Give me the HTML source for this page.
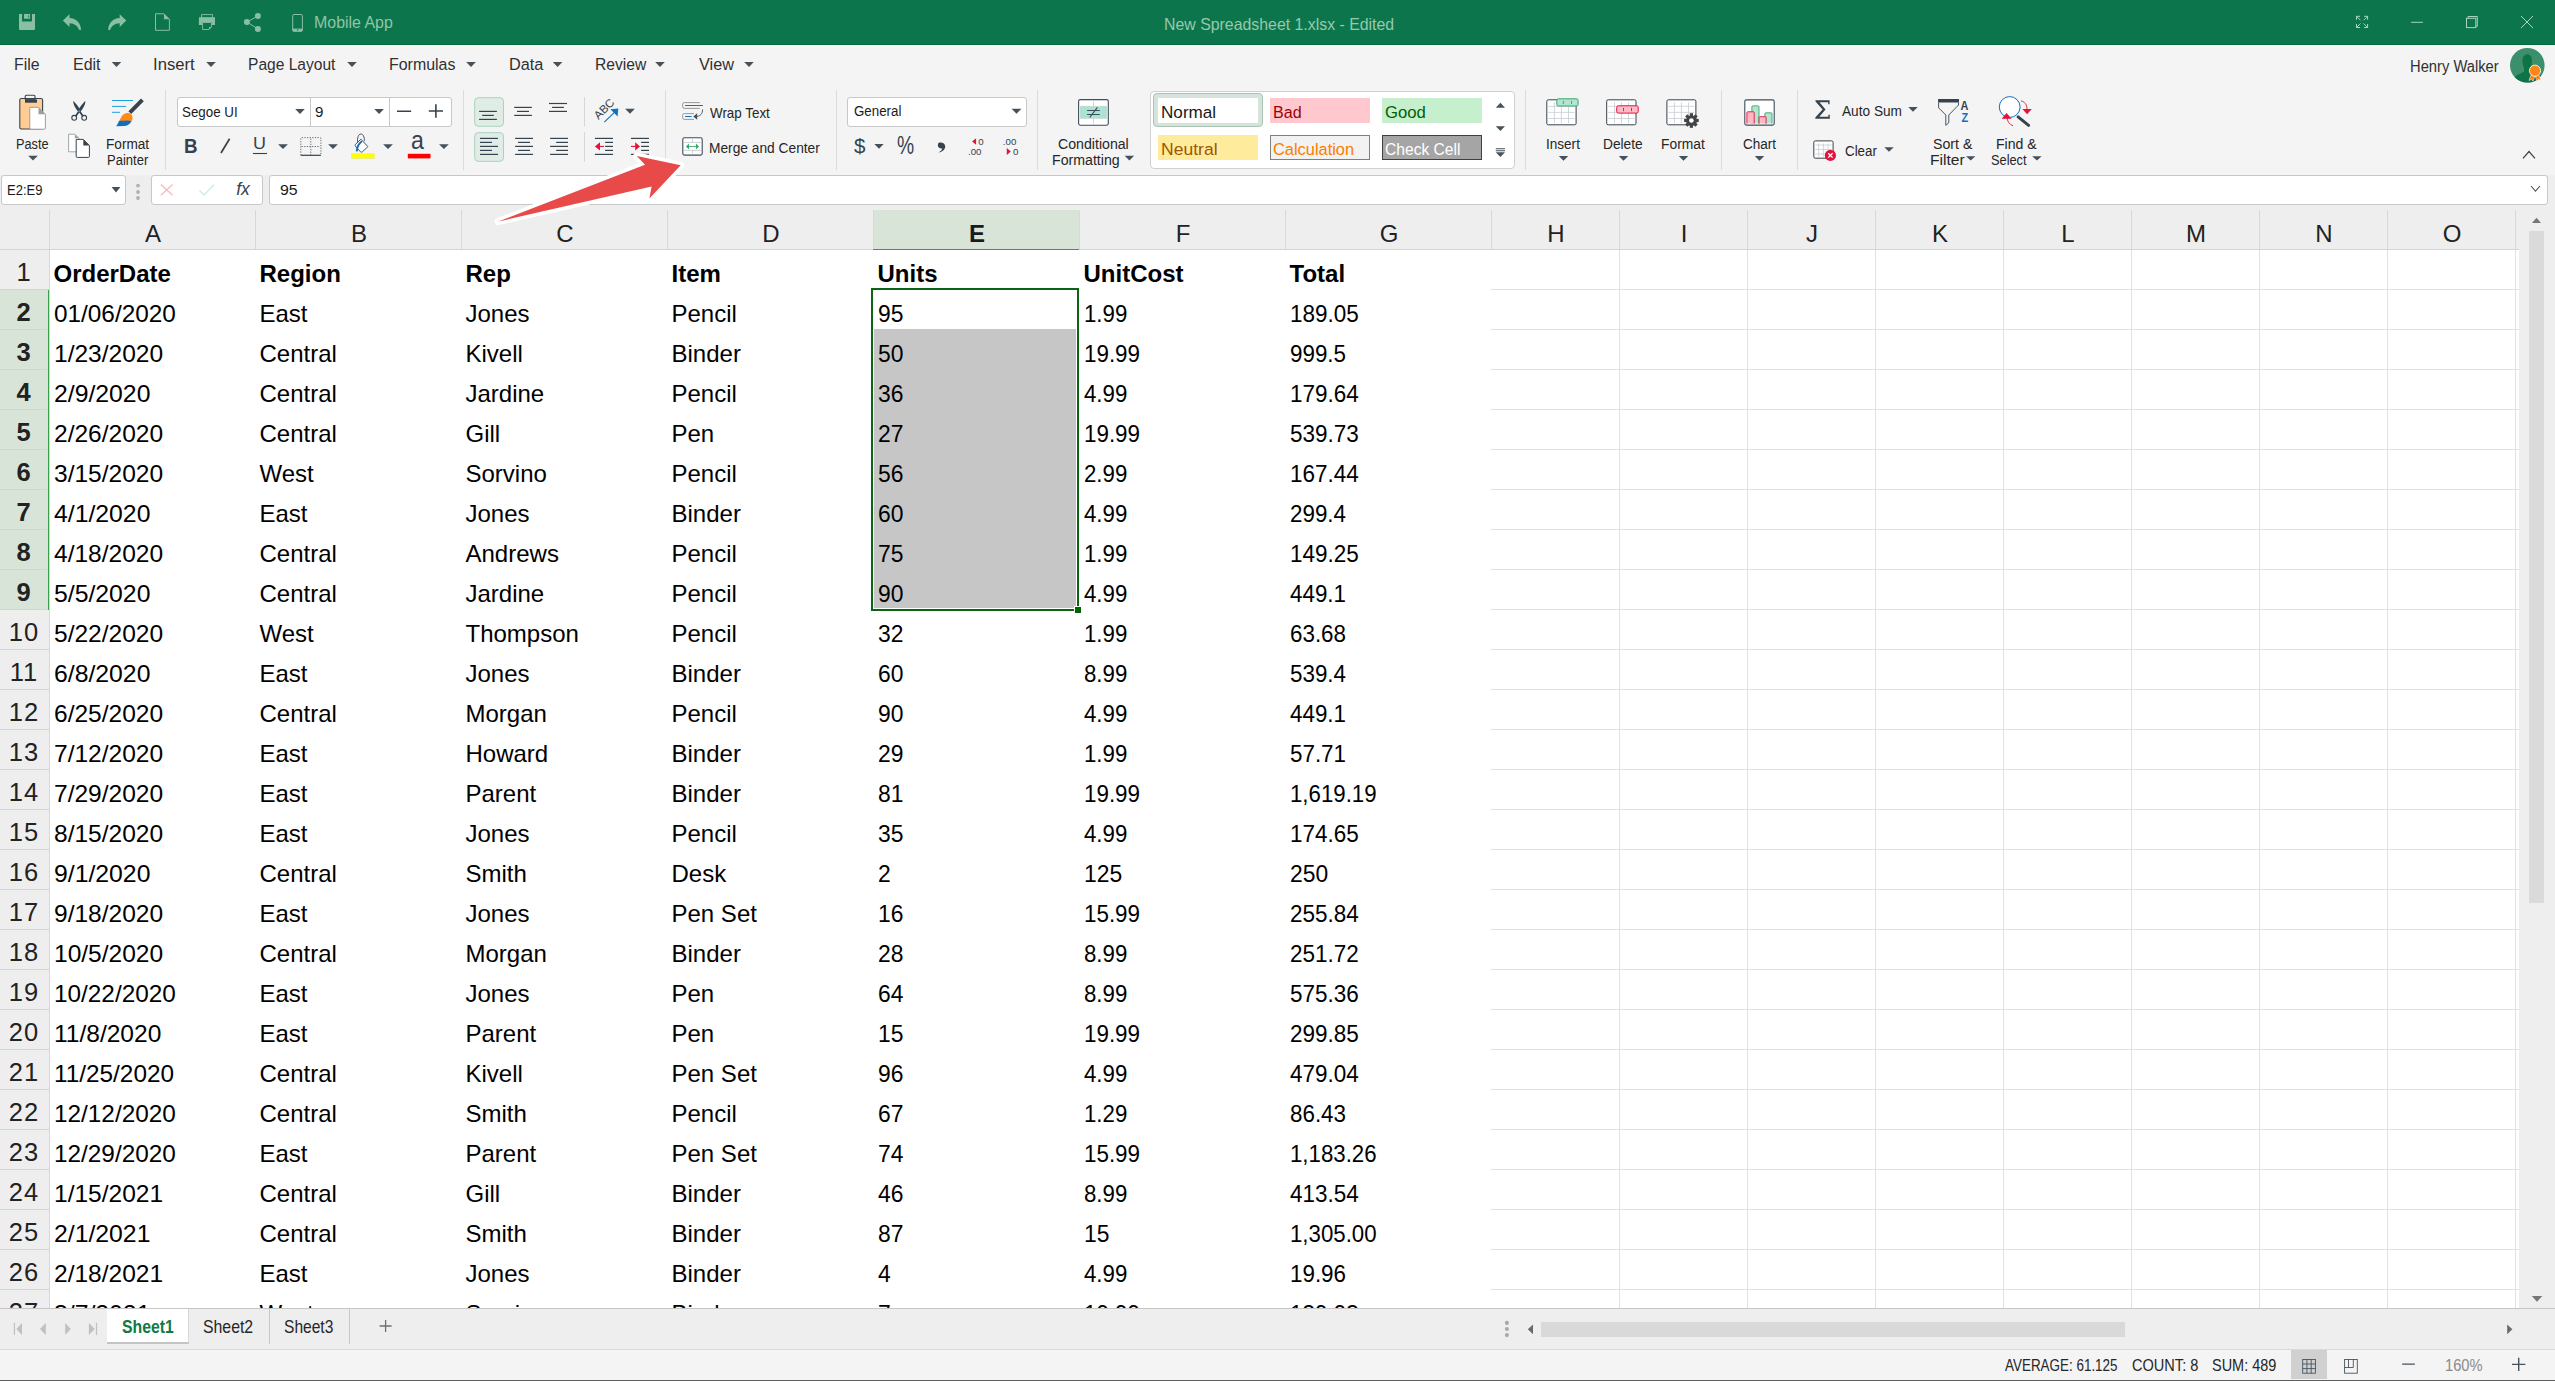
<!DOCTYPE html>
<html><head><meta charset="utf-8"><title>Spreadsheet</title>
<style>*{box-sizing:border-box;}
html,body{margin:0;padding:0;}
body{width:2555px;height:1381px;overflow:hidden;position:relative;background:#f4f4f4;font-family:"Liberation Sans",sans-serif;color:#222;}
.a{position:absolute;}
.t{position:absolute;white-space:nowrap;line-height:1;}
#title{left:0;top:0;width:2555px;height:45px;background:#0d754b;}
#menu{left:0;top:45px;width:2555px;height:43px;background:#f4f4f4;}
#ribbon{left:0;top:88px;width:2555px;height:87px;background:#f4f4f4;}
#fbar{left:0;top:175px;width:2555px;height:35px;background:#f4f4f4;border-top:1px solid #d4d4d4;}
.box{position:absolute;background:#fff;border:1px solid #c8c8c8;border-radius:4px;}
#grid{left:0;top:210px;width:2519px;height:1098px;background:#fff;overflow:hidden;}
.ch{position:absolute;top:0;height:40px;background:#eeeeee;border-bottom:1px solid #d6d6d6;}
.cl{position:absolute;top:0;height:39px;width:1px;background:#dadada;}
.rh{position:absolute;left:0;width:49px;height:40px;background:#eeeeee;border-bottom:1px solid #d6d6d6;}
.cell{position:absolute;font-size:24px;color:#000;white-space:nowrap;line-height:1;}
.hl{position:absolute;height:1px;background:#e1e1e1;}
.vl{position:absolute;width:1px;background:#e1e1e1;}
#tabs{left:0;top:1308px;width:2555px;height:42px;background:#eeeeee;border-top:1px solid #d0d0d0;}
#status{left:0;top:1350px;width:2555px;height:31px;background:#f4f4f4;border-top:1px solid #e0e0e0;}
</style></head>
<body>
<div class="a" style="left:0;top:0;width:2555px;height:45px;background:#0d754b"></div><div class="a" style="left:0;top:44px;width:2555px;height:1px;background:#066a3c"></div><div class="t" style="left:313.99px;top:15.01px;font-size:15.70px;color:#8dc6a8;transform:scaleX(1.0153);transform-origin:0 0;">Mobile App</div><div class="t" style="left:1163.70px;top:16.22px;font-size:16.28px;color:#96c9ad;transform:scaleX(0.9753);transform-origin:0 0;">New Spreadsheet 1.xlsx - Edited</div><div class="t" style="left:14.20px;top:56.73px;font-size:16.86px;color:#303030;transform:scaleX(0.9386);transform-origin:0 0;">File</div><div class="t" style="left:73.09px;top:56.73px;font-size:16.86px;color:#303030;transform:scaleX(0.9474);transform-origin:0 0;">Edit</div><div class="t" style="left:153.47px;top:56.73px;font-size:16.86px;color:#303030;transform:scaleX(0.9877);transform-origin:0 0;">Insert</div><div class="t" style="left:247.72px;top:56.73px;font-size:16.86px;color:#303030;transform:scaleX(0.9229);transform-origin:0 0;">Page Layout</div><div class="t" style="left:389.19px;top:56.73px;font-size:16.86px;color:#303030;transform:scaleX(0.9446);transform-origin:0 0;">Formulas</div><div class="t" style="left:508.67px;top:56.73px;font-size:16.86px;color:#303030;transform:scaleX(0.9637);transform-origin:0 0;">Data</div><div class="t" style="left:594.72px;top:56.73px;font-size:16.86px;color:#303030;transform:scaleX(0.9267);transform-origin:0 0;">Review</div><div class="t" style="left:698.93px;top:56.73px;font-size:16.86px;color:#303030;transform:scaleX(0.9664);transform-origin:0 0;">View</div><div class="t" style="left:2410.29px;top:58.59px;font-size:15.84px;color:#303030;transform:scaleX(0.9305);transform-origin:0 0;">Henry Walker</div><div class="t" style="left:15.95px;top:136.70px;font-size:14.53px;color:#262626;transform:scaleX(0.8773);transform-origin:0 0;">Paste</div><div class="t" style="left:105.88px;top:136.70px;font-size:14.53px;color:#262626;transform:scaleX(0.9388);transform-origin:0 0;">Format</div><div class="t" style="left:106.93px;top:152.70px;font-size:14.53px;color:#262626;transform:scaleX(0.8964);transform-origin:0 0;">Painter</div><div class="box" style="left:176.7px;top:97.2px;width:275.7px;height:29.4px;border-radius:3px"></div><div class="a" style="left:309.5px;top:98px;width:1px;height:28px;background:#c8c8c8"></div><div class="a" style="left:388.5px;top:98px;width:1px;height:28px;background:#c8c8c8"></div><div class="t" style="left:181.90px;top:105.13px;font-size:14.97px;color:#1a1a1a;transform:scaleX(0.8911);transform-origin:0 0;">Segoe UI</div><div class="t" style="left:315.30px;top:105.13px;font-size:14.97px;color:#1a1a1a;transform:scaleX(1.0099);transform-origin:0 0;">9</div><div class="t" style="left:710.45px;top:105.30px;font-size:15.12px;color:#262626;transform:scaleX(0.8867);transform-origin:0 0;">Wrap Text</div><div class="t" style="left:709.37px;top:140.06px;font-size:15.41px;color:#262626;transform:scaleX(0.8926);transform-origin:0 0;">Merge and Center</div><div class="box" style="left:847.4px;top:97px;width:179.4px;height:29.5px;border-radius:3px"></div><div class="t" style="left:853.53px;top:104.45px;font-size:14.83px;color:#1a1a1a;transform:scaleX(0.8978);transform-origin:0 0;">General</div><div class="t" style="left:1058.29px;top:136.90px;font-size:14.53px;color:#262626;transform:scaleX(0.9742);transform-origin:0 0;">Conditional</div><div class="t" style="left:1052.14px;top:152.80px;font-size:14.53px;color:#262626;transform:scaleX(0.9756);transform-origin:0 0;">Formatting</div><div class="box" style="left:1150.3px;top:90.8px;width:364.3px;height:78.3px;border-color:#d0d0d0;border-radius:4px"></div><div class="a" style="left:1153.4px;top:93.4px;width:109.3px;height:33.9px;background:#d5e3da;border:1px solid #a9c5b4;border-radius:4px"></div><div class="a" style="left:1158px;top:98px;width:100px;height:25px;background:#fff"></div><div class="t" style="left:1161.29px;top:104.04px;font-size:16.13px;color:#1a1a1a;transform:scaleX(1.0623);transform-origin:0 0;">Normal</div><div class="a" style="left:1270px;top:98px;width:100px;height:24.6px;background:#ffc7ce"></div><div class="t" style="left:1272.97px;top:104.04px;font-size:16.13px;color:#9c0006;">Bad</div><div class="a" style="left:1382px;top:98px;width:99.8px;height:24.6px;background:#c6efce"></div><div class="t" style="left:1385.16px;top:104.04px;font-size:16.13px;color:#006100;transform:scaleX(1.0366);transform-origin:0 0;">Good</div><div class="a" style="left:1158px;top:135px;width:100px;height:24.6px;background:#ffeb9c"></div><div class="t" style="left:1161.26px;top:140.94px;font-size:16.13px;color:#9c5700;transform:scaleX(1.0885);transform-origin:0 0;">Neutral</div><div class="a" style="left:1270px;top:135px;width:100px;height:24.6px;background:#f2f2f2;border:1px solid #7f7f7f"></div><div class="t" style="left:1273.48px;top:140.94px;font-size:16.13px;color:#fa7d00;transform:scaleX(1.0170);transform-origin:0 0;">Calculation</div><div class="a" style="left:1382px;top:135px;width:99.8px;height:24.6px;background:#a5a5a5;border:1px solid #3f3f3f"></div><div class="t" style="left:1385.22px;top:140.94px;font-size:16.13px;color:#ffffff;transform:scaleX(0.9693);transform-origin:0 0;">Check Cell</div><div class="t" style="left:1546.15px;top:136.90px;font-size:14.53px;color:#262626;transform:scaleX(0.9338);transform-origin:0 0;">Insert</div><div class="t" style="left:1603.37px;top:136.90px;font-size:14.53px;color:#262626;transform:scaleX(0.9459);transform-origin:0 0;">Delete</div><div class="t" style="left:1661.27px;top:136.90px;font-size:14.53px;color:#262626;transform:scaleX(0.9522);transform-origin:0 0;">Format</div><div class="t" style="left:1742.52px;top:136.90px;font-size:14.53px;color:#262626;transform:scaleX(0.9302);transform-origin:0 0;">Chart</div><div class="t" style="left:1842.17px;top:102.98px;font-size:15.26px;color:#262626;transform:scaleX(0.8956);transform-origin:0 0;">Auto Sum</div><div class="t" style="left:1845.33px;top:143.28px;font-size:15.26px;color:#262626;transform:scaleX(0.8740);transform-origin:0 0;">Clear</div><div class="t" style="left:1933.36px;top:136.90px;font-size:14.53px;color:#262626;transform:scaleX(0.9767);transform-origin:0 0;">Sort &amp;</div><div class="t" style="left:1930.41px;top:153.00px;font-size:14.53px;color:#262626;transform:scaleX(1.0786);transform-origin:0 0;">Filter</div><div class="t" style="left:1995.74px;top:136.90px;font-size:14.53px;color:#262626;transform:scaleX(0.9705);transform-origin:0 0;">Find &amp;</div><div class="t" style="left:1990.82px;top:153.00px;font-size:14.53px;color:#262626;transform:scaleX(0.8805);transform-origin:0 0;">Select</div><div class="a" style="left:164.9px;top:90px;width:1px;height:80px;background:#dcdcdc"></div><div class="a" style="left:463.2px;top:90px;width:1px;height:80px;background:#dcdcdc"></div><div class="a" style="left:665.3px;top:90px;width:1px;height:80px;background:#dcdcdc"></div><div class="a" style="left:836.0px;top:90px;width:1px;height:80px;background:#dcdcdc"></div><div class="a" style="left:1036.9px;top:90px;width:1px;height:80px;background:#dcdcdc"></div><div class="a" style="left:1524.9px;top:90px;width:1px;height:80px;background:#dcdcdc"></div><div class="a" style="left:1720.7px;top:90px;width:1px;height:80px;background:#dcdcdc"></div><div class="a" style="left:1797.0px;top:90px;width:1px;height:80px;background:#dcdcdc"></div><div class="a" style="left:0;top:175px;width:2555px;height:35px;background:#eeeeee"></div><div class="box" style="left:1.2px;top:175.4px;width:125px;height:29.5px;border-radius:3px"></div><div class="t" style="left:7.23px;top:182.70px;font-size:14.53px;color:#1a1a1a;transform:scaleX(0.8961);transform-origin:0 0;">E2:E9</div><div class="box" style="left:151px;top:175.4px;width:111.6px;height:29.5px;border-radius:3px"></div><div class="box" style="left:268.7px;top:175.4px;width:2279.6px;height:29.5px;border-radius:3px"></div><div class="t" style="left:279.97px;top:183.20px;font-size:14.53px;color:#1a1a1a;transform:scaleX(1.0941);transform-origin:0 0;">95</div><div class="t" style="left:183.56px;top:135.53px;font-size:20.64px;color:#36434d;font-weight:bold;transform:scaleX(0.9119);transform-origin:0 0;">B</div><div class="t" style="left:253.22px;top:135.48px;font-size:17.15px;color:#36434d;transform:scaleX(1.0452);transform-origin:0 0;">U</div><div class="t" style="left:410.83px;top:127.67px;font-size:25.44px;color:#36434d;transform:scaleX(0.9084);transform-origin:0 0;">a</div><div class="t" style="left:853.79px;top:135.82px;font-size:20.06px;color:#36434d;transform:scaleX(1.0234);transform-origin:0 0;">$</div><div class="t" style="left:897.32px;top:133.21px;font-size:25.15px;color:#36434d;transform:scaleX(0.7672);transform-origin:0 0;">%</div>
<div id="grid" class="a"><div class="a" style="left:0;top:0;width:2519px;height:39px;background:#eeeeee"></div><div class="a" style="left:0;top:39px;width:2519px;height:1px;background:#d5d5d5"></div><div class="a" style="left:873px;top:0;width:206px;height:40px;background:#d8e4d8;border-bottom:1.5px solid #3a9a4a"></div><div class="a" style="left:49px;top:0;width:1px;height:39px;background:#d8d8d8"></div><div class="a" style="left:255px;top:0;width:1px;height:39px;background:#d8d8d8"></div><div class="a" style="left:461px;top:0;width:1px;height:39px;background:#d8d8d8"></div><div class="a" style="left:667px;top:0;width:1px;height:39px;background:#d8d8d8"></div><div class="a" style="left:873px;top:0;width:1px;height:39px;background:#d8d8d8"></div><div class="a" style="left:1079px;top:0;width:1px;height:39px;background:#d8d8d8"></div><div class="a" style="left:1285px;top:0;width:1px;height:39px;background:#d8d8d8"></div><div class="a" style="left:1491px;top:0;width:1px;height:39px;background:#d8d8d8"></div><div class="a" style="left:1619px;top:0;width:1px;height:39px;background:#d8d8d8"></div><div class="a" style="left:1747px;top:0;width:1px;height:39px;background:#d8d8d8"></div><div class="a" style="left:1875px;top:0;width:1px;height:39px;background:#d8d8d8"></div><div class="a" style="left:2003px;top:0;width:1px;height:39px;background:#d8d8d8"></div><div class="a" style="left:2131px;top:0;width:1px;height:39px;background:#d8d8d8"></div><div class="a" style="left:2259px;top:0;width:1px;height:39px;background:#d8d8d8"></div><div class="a" style="left:2387px;top:0;width:1px;height:39px;background:#d8d8d8"></div><div class="a" style="left:2515px;top:0;width:1px;height:39px;background:#d8d8d8"></div><div class="t" style="left:50px;width:206px;text-align:center;top:11.70px;font-size:24px;color:#222;">A</div><div class="t" style="left:256px;width:206px;text-align:center;top:11.70px;font-size:24px;color:#222;">B</div><div class="t" style="left:462px;width:206px;text-align:center;top:11.70px;font-size:24px;color:#222;">C</div><div class="t" style="left:668px;width:206px;text-align:center;top:11.70px;font-size:24px;color:#222;">D</div><div class="t" style="left:874px;width:206px;text-align:center;top:11.70px;font-size:24px;color:#222;font-weight:bold;color:#1a1a1a;">E</div><div class="t" style="left:1080px;width:206px;text-align:center;top:11.70px;font-size:24px;color:#222;">F</div><div class="t" style="left:1286px;width:206px;text-align:center;top:11.70px;font-size:24px;color:#222;">G</div><div class="t" style="left:1492px;width:128px;text-align:center;top:11.70px;font-size:24px;color:#222;">H</div><div class="t" style="left:1620px;width:128px;text-align:center;top:11.70px;font-size:24px;color:#222;">I</div><div class="t" style="left:1748px;width:128px;text-align:center;top:11.70px;font-size:24px;color:#222;">J</div><div class="t" style="left:1876px;width:128px;text-align:center;top:11.70px;font-size:24px;color:#222;">K</div><div class="t" style="left:2004px;width:128px;text-align:center;top:11.70px;font-size:24px;color:#222;">L</div><div class="t" style="left:2132px;width:128px;text-align:center;top:11.70px;font-size:24px;color:#222;">M</div><div class="t" style="left:2260px;width:128px;text-align:center;top:11.70px;font-size:24px;color:#222;">N</div><div class="t" style="left:2388px;width:128px;text-align:center;top:11.70px;font-size:24px;color:#222;">O</div><div class="a" style="left:0;top:40px;width:49px;height:1100px;background:#eeeeee"></div><div class="a" style="left:49px;top:40px;width:1px;height:1100px;background:#d8d8d8"></div><div class="a" style="left:0;top:79px;width:49px;height:1px;background:#d3d3d3"></div><div class="t" style="left:0.5px;width:47px;text-align:center;top:50.41px;font-size:25.5px;letter-spacing:1px;color:#222;">1</div><div class="a" style="left:0;top:80px;width:49px;height:40px;background:#d8e4d8"></div><div class="a" style="left:0;top:119px;width:47px;height:1px;background:#d3d3d3"></div><div class="t" style="left:0.5px;width:47px;text-align:center;top:90.41px;font-size:25.5px;letter-spacing:1px;color:#222;font-weight:bold;">2</div><div class="a" style="left:0;top:120px;width:49px;height:40px;background:#d8e4d8"></div><div class="a" style="left:0;top:159px;width:47px;height:1px;background:#d3d3d3"></div><div class="t" style="left:0.5px;width:47px;text-align:center;top:130.41px;font-size:25.5px;letter-spacing:1px;color:#222;font-weight:bold;">3</div><div class="a" style="left:0;top:160px;width:49px;height:40px;background:#d8e4d8"></div><div class="a" style="left:0;top:199px;width:47px;height:1px;background:#d3d3d3"></div><div class="t" style="left:0.5px;width:47px;text-align:center;top:170.41px;font-size:25.5px;letter-spacing:1px;color:#222;font-weight:bold;">4</div><div class="a" style="left:0;top:200px;width:49px;height:40px;background:#d8e4d8"></div><div class="a" style="left:0;top:239px;width:47px;height:1px;background:#d3d3d3"></div><div class="t" style="left:0.5px;width:47px;text-align:center;top:210.41px;font-size:25.5px;letter-spacing:1px;color:#222;font-weight:bold;">5</div><div class="a" style="left:0;top:240px;width:49px;height:40px;background:#d8e4d8"></div><div class="a" style="left:0;top:279px;width:47px;height:1px;background:#d3d3d3"></div><div class="t" style="left:0.5px;width:47px;text-align:center;top:250.41px;font-size:25.5px;letter-spacing:1px;color:#222;font-weight:bold;">6</div><div class="a" style="left:0;top:280px;width:49px;height:40px;background:#d8e4d8"></div><div class="a" style="left:0;top:319px;width:47px;height:1px;background:#d3d3d3"></div><div class="t" style="left:0.5px;width:47px;text-align:center;top:290.41px;font-size:25.5px;letter-spacing:1px;color:#222;font-weight:bold;">7</div><div class="a" style="left:0;top:320px;width:49px;height:40px;background:#d8e4d8"></div><div class="a" style="left:0;top:359px;width:47px;height:1px;background:#d3d3d3"></div><div class="t" style="left:0.5px;width:47px;text-align:center;top:330.41px;font-size:25.5px;letter-spacing:1px;color:#222;font-weight:bold;">8</div><div class="a" style="left:0;top:360px;width:49px;height:40px;background:#d8e4d8"></div><div class="a" style="left:0;top:399px;width:47px;height:1px;background:#d3d3d3"></div><div class="t" style="left:0.5px;width:47px;text-align:center;top:370.41px;font-size:25.5px;letter-spacing:1px;color:#222;font-weight:bold;">9</div><div class="a" style="left:0;top:439px;width:49px;height:1px;background:#d3d3d3"></div><div class="t" style="left:0.5px;width:47px;text-align:center;top:410.41px;font-size:25.5px;letter-spacing:1px;color:#222;">10</div><div class="a" style="left:0;top:479px;width:49px;height:1px;background:#d3d3d3"></div><div class="t" style="left:0.5px;width:47px;text-align:center;top:450.41px;font-size:25.5px;letter-spacing:1px;color:#222;">11</div><div class="a" style="left:0;top:519px;width:49px;height:1px;background:#d3d3d3"></div><div class="t" style="left:0.5px;width:47px;text-align:center;top:490.41px;font-size:25.5px;letter-spacing:1px;color:#222;">12</div><div class="a" style="left:0;top:559px;width:49px;height:1px;background:#d3d3d3"></div><div class="t" style="left:0.5px;width:47px;text-align:center;top:530.41px;font-size:25.5px;letter-spacing:1px;color:#222;">13</div><div class="a" style="left:0;top:599px;width:49px;height:1px;background:#d3d3d3"></div><div class="t" style="left:0.5px;width:47px;text-align:center;top:570.41px;font-size:25.5px;letter-spacing:1px;color:#222;">14</div><div class="a" style="left:0;top:639px;width:49px;height:1px;background:#d3d3d3"></div><div class="t" style="left:0.5px;width:47px;text-align:center;top:610.41px;font-size:25.5px;letter-spacing:1px;color:#222;">15</div><div class="a" style="left:0;top:679px;width:49px;height:1px;background:#d3d3d3"></div><div class="t" style="left:0.5px;width:47px;text-align:center;top:650.41px;font-size:25.5px;letter-spacing:1px;color:#222;">16</div><div class="a" style="left:0;top:719px;width:49px;height:1px;background:#d3d3d3"></div><div class="t" style="left:0.5px;width:47px;text-align:center;top:690.41px;font-size:25.5px;letter-spacing:1px;color:#222;">17</div><div class="a" style="left:0;top:759px;width:49px;height:1px;background:#d3d3d3"></div><div class="t" style="left:0.5px;width:47px;text-align:center;top:730.41px;font-size:25.5px;letter-spacing:1px;color:#222;">18</div><div class="a" style="left:0;top:799px;width:49px;height:1px;background:#d3d3d3"></div><div class="t" style="left:0.5px;width:47px;text-align:center;top:770.41px;font-size:25.5px;letter-spacing:1px;color:#222;">19</div><div class="a" style="left:0;top:839px;width:49px;height:1px;background:#d3d3d3"></div><div class="t" style="left:0.5px;width:47px;text-align:center;top:810.41px;font-size:25.5px;letter-spacing:1px;color:#222;">20</div><div class="a" style="left:0;top:879px;width:49px;height:1px;background:#d3d3d3"></div><div class="t" style="left:0.5px;width:47px;text-align:center;top:850.41px;font-size:25.5px;letter-spacing:1px;color:#222;">21</div><div class="a" style="left:0;top:919px;width:49px;height:1px;background:#d3d3d3"></div><div class="t" style="left:0.5px;width:47px;text-align:center;top:890.41px;font-size:25.5px;letter-spacing:1px;color:#222;">22</div><div class="a" style="left:0;top:959px;width:49px;height:1px;background:#d3d3d3"></div><div class="t" style="left:0.5px;width:47px;text-align:center;top:930.41px;font-size:25.5px;letter-spacing:1px;color:#222;">23</div><div class="a" style="left:0;top:999px;width:49px;height:1px;background:#d3d3d3"></div><div class="t" style="left:0.5px;width:47px;text-align:center;top:970.41px;font-size:25.5px;letter-spacing:1px;color:#222;">24</div><div class="a" style="left:0;top:1039px;width:49px;height:1px;background:#d3d3d3"></div><div class="t" style="left:0.5px;width:47px;text-align:center;top:1010.41px;font-size:25.5px;letter-spacing:1px;color:#222;">25</div><div class="a" style="left:0;top:1079px;width:49px;height:1px;background:#d3d3d3"></div><div class="t" style="left:0.5px;width:47px;text-align:center;top:1050.41px;font-size:25.5px;letter-spacing:1px;color:#222;">26</div><div class="a" style="left:0;top:1119px;width:49px;height:1px;background:#d3d3d3"></div><div class="t" style="left:0.5px;width:47px;text-align:center;top:1090.41px;font-size:25.5px;letter-spacing:1px;color:#222;">27</div><div class="a" style="left:48px;top:80px;width:1px;height:320px;background:#38a048"></div><div class="a" style="left:1491px;top:79px;width:1028px;height:1px;background:#e1e1e1"></div><div class="a" style="left:1491px;top:119px;width:1028px;height:1px;background:#e1e1e1"></div><div class="a" style="left:1491px;top:159px;width:1028px;height:1px;background:#e1e1e1"></div><div class="a" style="left:1491px;top:199px;width:1028px;height:1px;background:#e1e1e1"></div><div class="a" style="left:1491px;top:239px;width:1028px;height:1px;background:#e1e1e1"></div><div class="a" style="left:1491px;top:279px;width:1028px;height:1px;background:#e1e1e1"></div><div class="a" style="left:1491px;top:319px;width:1028px;height:1px;background:#e1e1e1"></div><div class="a" style="left:1491px;top:359px;width:1028px;height:1px;background:#e1e1e1"></div><div class="a" style="left:1491px;top:399px;width:1028px;height:1px;background:#e1e1e1"></div><div class="a" style="left:1491px;top:439px;width:1028px;height:1px;background:#e1e1e1"></div><div class="a" style="left:1491px;top:479px;width:1028px;height:1px;background:#e1e1e1"></div><div class="a" style="left:1491px;top:519px;width:1028px;height:1px;background:#e1e1e1"></div><div class="a" style="left:1491px;top:559px;width:1028px;height:1px;background:#e1e1e1"></div><div class="a" style="left:1491px;top:599px;width:1028px;height:1px;background:#e1e1e1"></div><div class="a" style="left:1491px;top:639px;width:1028px;height:1px;background:#e1e1e1"></div><div class="a" style="left:1491px;top:679px;width:1028px;height:1px;background:#e1e1e1"></div><div class="a" style="left:1491px;top:719px;width:1028px;height:1px;background:#e1e1e1"></div><div class="a" style="left:1491px;top:759px;width:1028px;height:1px;background:#e1e1e1"></div><div class="a" style="left:1491px;top:799px;width:1028px;height:1px;background:#e1e1e1"></div><div class="a" style="left:1491px;top:839px;width:1028px;height:1px;background:#e1e1e1"></div><div class="a" style="left:1491px;top:879px;width:1028px;height:1px;background:#e1e1e1"></div><div class="a" style="left:1491px;top:919px;width:1028px;height:1px;background:#e1e1e1"></div><div class="a" style="left:1491px;top:959px;width:1028px;height:1px;background:#e1e1e1"></div><div class="a" style="left:1491px;top:999px;width:1028px;height:1px;background:#e1e1e1"></div><div class="a" style="left:1491px;top:1039px;width:1028px;height:1px;background:#e1e1e1"></div><div class="a" style="left:1491px;top:1079px;width:1028px;height:1px;background:#e1e1e1"></div><div class="a" style="left:1491px;top:1119px;width:1028px;height:1px;background:#e1e1e1"></div><div class="a" style="left:1619px;top:40px;width:1px;height:1100px;background:#e1e1e1"></div><div class="a" style="left:1747px;top:40px;width:1px;height:1100px;background:#e1e1e1"></div><div class="a" style="left:1875px;top:40px;width:1px;height:1100px;background:#e1e1e1"></div><div class="a" style="left:2003px;top:40px;width:1px;height:1100px;background:#e1e1e1"></div><div class="a" style="left:2131px;top:40px;width:1px;height:1100px;background:#e1e1e1"></div><div class="a" style="left:2259px;top:40px;width:1px;height:1100px;background:#e1e1e1"></div><div class="a" style="left:2387px;top:40px;width:1px;height:1100px;background:#e1e1e1"></div><div class="a" style="left:2515px;top:40px;width:1px;height:1100px;background:#e1e1e1"></div><div class="a" style="left:874px;top:119px;width:202px;height:279px;background:#c6c6c6"></div><div class="cell" style="left:53.5px;top:51.70px;font-weight:bold;">OrderDate</div><div class="cell" style="left:259.5px;top:51.70px;font-weight:bold;">Region</div><div class="cell" style="left:465.5px;top:51.70px;font-weight:bold;">Rep</div><div class="cell" style="left:671.5px;top:51.70px;font-weight:bold;">Item</div><div class="cell" style="left:877.5px;top:51.70px;font-weight:bold;">Units</div><div class="cell" style="left:1083.5px;top:51.70px;font-weight:bold;">UnitCost</div><div class="cell" style="left:1289.5px;top:51.70px;font-weight:bold;">Total</div><div class="cell" style="left:53.5px;top:91.70px;transform:scaleX(1.0142);transform-origin:0 0;">01/06/2020</div><div class="cell" style="left:259.5px;top:91.70px;">East</div><div class="cell" style="left:465.5px;top:91.70px;">Jones</div><div class="cell" style="left:671.5px;top:91.70px;">Pencil</div><div class="cell" style="left:877.5px;top:91.70px;transform:scaleX(0.9517);transform-origin:0 0;">95</div><div class="cell" style="left:1083.5px;top:91.70px;transform:scaleX(0.9271);transform-origin:0 0;">1.99</div><div class="cell" style="left:1289.5px;top:91.70px;transform:scaleX(0.9361);transform-origin:0 0;">189.05</div><div class="cell" style="left:53.5px;top:131.70px;transform:scaleX(1.0220);transform-origin:0 0;">1/23/2020</div><div class="cell" style="left:259.5px;top:131.70px;">Central</div><div class="cell" style="left:465.5px;top:131.70px;">Kivell</div><div class="cell" style="left:671.5px;top:131.70px;">Binder</div><div class="cell" style="left:877.5px;top:131.70px;transform:scaleX(0.9517);transform-origin:0 0;">50</div><div class="cell" style="left:1083.5px;top:131.70px;transform:scaleX(0.9326);transform-origin:0 0;">19.99</div><div class="cell" style="left:1289.5px;top:131.70px;transform:scaleX(0.9326);transform-origin:0 0;">999.5</div><div class="cell" style="left:53.5px;top:171.70px;transform:scaleX(1.0320);transform-origin:0 0;">2/9/2020</div><div class="cell" style="left:259.5px;top:171.70px;">Central</div><div class="cell" style="left:465.5px;top:171.70px;">Jardine</div><div class="cell" style="left:671.5px;top:171.70px;">Pencil</div><div class="cell" style="left:877.5px;top:171.70px;transform:scaleX(0.9517);transform-origin:0 0;">36</div><div class="cell" style="left:1083.5px;top:171.70px;transform:scaleX(0.9271);transform-origin:0 0;">4.99</div><div class="cell" style="left:1289.5px;top:171.70px;transform:scaleX(0.9361);transform-origin:0 0;">179.64</div><div class="cell" style="left:53.5px;top:211.70px;transform:scaleX(1.0220);transform-origin:0 0;">2/26/2020</div><div class="cell" style="left:259.5px;top:211.70px;">Central</div><div class="cell" style="left:465.5px;top:211.70px;">Gill</div><div class="cell" style="left:671.5px;top:211.70px;">Pen</div><div class="cell" style="left:877.5px;top:211.70px;transform:scaleX(0.9517);transform-origin:0 0;">27</div><div class="cell" style="left:1083.5px;top:211.70px;transform:scaleX(0.9326);transform-origin:0 0;">19.99</div><div class="cell" style="left:1289.5px;top:211.70px;transform:scaleX(0.9361);transform-origin:0 0;">539.73</div><div class="cell" style="left:53.5px;top:251.70px;transform:scaleX(1.0220);transform-origin:0 0;">3/15/2020</div><div class="cell" style="left:259.5px;top:251.70px;">West</div><div class="cell" style="left:465.5px;top:251.70px;">Sorvino</div><div class="cell" style="left:671.5px;top:251.70px;">Pencil</div><div class="cell" style="left:877.5px;top:251.70px;transform:scaleX(0.9517);transform-origin:0 0;">56</div><div class="cell" style="left:1083.5px;top:251.70px;transform:scaleX(0.9271);transform-origin:0 0;">2.99</div><div class="cell" style="left:1289.5px;top:251.70px;transform:scaleX(0.9361);transform-origin:0 0;">167.44</div><div class="cell" style="left:53.5px;top:291.70px;transform:scaleX(1.0320);transform-origin:0 0;">4/1/2020</div><div class="cell" style="left:259.5px;top:291.70px;">East</div><div class="cell" style="left:465.5px;top:291.70px;">Jones</div><div class="cell" style="left:671.5px;top:291.70px;">Binder</div><div class="cell" style="left:877.5px;top:291.70px;transform:scaleX(0.9517);transform-origin:0 0;">60</div><div class="cell" style="left:1083.5px;top:291.70px;transform:scaleX(0.9271);transform-origin:0 0;">4.99</div><div class="cell" style="left:1289.5px;top:291.70px;transform:scaleX(0.9326);transform-origin:0 0;">299.4</div><div class="cell" style="left:53.5px;top:331.70px;transform:scaleX(1.0220);transform-origin:0 0;">4/18/2020</div><div class="cell" style="left:259.5px;top:331.70px;">Central</div><div class="cell" style="left:465.5px;top:331.70px;">Andrews</div><div class="cell" style="left:671.5px;top:331.70px;">Pencil</div><div class="cell" style="left:877.5px;top:331.70px;transform:scaleX(0.9517);transform-origin:0 0;">75</div><div class="cell" style="left:1083.5px;top:331.70px;transform:scaleX(0.9271);transform-origin:0 0;">1.99</div><div class="cell" style="left:1289.5px;top:331.70px;transform:scaleX(0.9361);transform-origin:0 0;">149.25</div><div class="cell" style="left:53.5px;top:371.70px;transform:scaleX(1.0320);transform-origin:0 0;">5/5/2020</div><div class="cell" style="left:259.5px;top:371.70px;">Central</div><div class="cell" style="left:465.5px;top:371.70px;">Jardine</div><div class="cell" style="left:671.5px;top:371.70px;">Pencil</div><div class="cell" style="left:877.5px;top:371.70px;transform:scaleX(0.9517);transform-origin:0 0;">90</div><div class="cell" style="left:1083.5px;top:371.70px;transform:scaleX(0.9271);transform-origin:0 0;">4.99</div><div class="cell" style="left:1289.5px;top:371.70px;transform:scaleX(0.9326);transform-origin:0 0;">449.1</div><div class="cell" style="left:53.5px;top:411.70px;transform:scaleX(1.0220);transform-origin:0 0;">5/22/2020</div><div class="cell" style="left:259.5px;top:411.70px;">West</div><div class="cell" style="left:465.5px;top:411.70px;">Thompson</div><div class="cell" style="left:671.5px;top:411.70px;">Pencil</div><div class="cell" style="left:877.5px;top:411.70px;transform:scaleX(0.9517);transform-origin:0 0;">32</div><div class="cell" style="left:1083.5px;top:411.70px;transform:scaleX(0.9271);transform-origin:0 0;">1.99</div><div class="cell" style="left:1289.5px;top:411.70px;transform:scaleX(0.9326);transform-origin:0 0;">63.68</div><div class="cell" style="left:53.5px;top:451.70px;transform:scaleX(1.0320);transform-origin:0 0;">6/8/2020</div><div class="cell" style="left:259.5px;top:451.70px;">East</div><div class="cell" style="left:465.5px;top:451.70px;">Jones</div><div class="cell" style="left:671.5px;top:451.70px;">Binder</div><div class="cell" style="left:877.5px;top:451.70px;transform:scaleX(0.9517);transform-origin:0 0;">60</div><div class="cell" style="left:1083.5px;top:451.70px;transform:scaleX(0.9271);transform-origin:0 0;">8.99</div><div class="cell" style="left:1289.5px;top:451.70px;transform:scaleX(0.9326);transform-origin:0 0;">539.4</div><div class="cell" style="left:53.5px;top:491.70px;transform:scaleX(1.0220);transform-origin:0 0;">6/25/2020</div><div class="cell" style="left:259.5px;top:491.70px;">Central</div><div class="cell" style="left:465.5px;top:491.70px;">Morgan</div><div class="cell" style="left:671.5px;top:491.70px;">Pencil</div><div class="cell" style="left:877.5px;top:491.70px;transform:scaleX(0.9517);transform-origin:0 0;">90</div><div class="cell" style="left:1083.5px;top:491.70px;transform:scaleX(0.9271);transform-origin:0 0;">4.99</div><div class="cell" style="left:1289.5px;top:491.70px;transform:scaleX(0.9326);transform-origin:0 0;">449.1</div><div class="cell" style="left:53.5px;top:531.70px;transform:scaleX(1.0220);transform-origin:0 0;">7/12/2020</div><div class="cell" style="left:259.5px;top:531.70px;">East</div><div class="cell" style="left:465.5px;top:531.70px;">Howard</div><div class="cell" style="left:671.5px;top:531.70px;">Binder</div><div class="cell" style="left:877.5px;top:531.70px;transform:scaleX(0.9517);transform-origin:0 0;">29</div><div class="cell" style="left:1083.5px;top:531.70px;transform:scaleX(0.9271);transform-origin:0 0;">1.99</div><div class="cell" style="left:1289.5px;top:531.70px;transform:scaleX(0.9326);transform-origin:0 0;">57.71</div><div class="cell" style="left:53.5px;top:571.70px;transform:scaleX(1.0220);transform-origin:0 0;">7/29/2020</div><div class="cell" style="left:259.5px;top:571.70px;">East</div><div class="cell" style="left:465.5px;top:571.70px;">Parent</div><div class="cell" style="left:671.5px;top:571.70px;">Binder</div><div class="cell" style="left:877.5px;top:571.70px;transform:scaleX(0.9517);transform-origin:0 0;">81</div><div class="cell" style="left:1083.5px;top:571.70px;transform:scaleX(0.9326);transform-origin:0 0;">19.99</div><div class="cell" style="left:1289.5px;top:571.70px;transform:scaleX(0.9271);transform-origin:0 0;">1,619.19</div><div class="cell" style="left:53.5px;top:611.70px;transform:scaleX(1.0220);transform-origin:0 0;">8/15/2020</div><div class="cell" style="left:259.5px;top:611.70px;">East</div><div class="cell" style="left:465.5px;top:611.70px;">Jones</div><div class="cell" style="left:671.5px;top:611.70px;">Pencil</div><div class="cell" style="left:877.5px;top:611.70px;transform:scaleX(0.9517);transform-origin:0 0;">35</div><div class="cell" style="left:1083.5px;top:611.70px;transform:scaleX(0.9271);transform-origin:0 0;">4.99</div><div class="cell" style="left:1289.5px;top:611.70px;transform:scaleX(0.9361);transform-origin:0 0;">174.65</div><div class="cell" style="left:53.5px;top:651.70px;transform:scaleX(1.0320);transform-origin:0 0;">9/1/2020</div><div class="cell" style="left:259.5px;top:651.70px;">Central</div><div class="cell" style="left:465.5px;top:651.70px;">Smith</div><div class="cell" style="left:671.5px;top:651.70px;">Desk</div><div class="cell" style="left:877.5px;top:651.70px;transform:scaleX(0.9517);transform-origin:0 0;">2</div><div class="cell" style="left:1083.5px;top:651.70px;transform:scaleX(0.9517);transform-origin:0 0;">125</div><div class="cell" style="left:1289.5px;top:651.70px;transform:scaleX(0.9517);transform-origin:0 0;">250</div><div class="cell" style="left:53.5px;top:691.70px;transform:scaleX(1.0220);transform-origin:0 0;">9/18/2020</div><div class="cell" style="left:259.5px;top:691.70px;">East</div><div class="cell" style="left:465.5px;top:691.70px;">Jones</div><div class="cell" style="left:671.5px;top:691.70px;">Pen Set</div><div class="cell" style="left:877.5px;top:691.70px;transform:scaleX(0.9517);transform-origin:0 0;">16</div><div class="cell" style="left:1083.5px;top:691.70px;transform:scaleX(0.9326);transform-origin:0 0;">15.99</div><div class="cell" style="left:1289.5px;top:691.70px;transform:scaleX(0.9361);transform-origin:0 0;">255.84</div><div class="cell" style="left:53.5px;top:731.70px;transform:scaleX(1.0220);transform-origin:0 0;">10/5/2020</div><div class="cell" style="left:259.5px;top:731.70px;">Central</div><div class="cell" style="left:465.5px;top:731.70px;">Morgan</div><div class="cell" style="left:671.5px;top:731.70px;">Binder</div><div class="cell" style="left:877.5px;top:731.70px;transform:scaleX(0.9517);transform-origin:0 0;">28</div><div class="cell" style="left:1083.5px;top:731.70px;transform:scaleX(0.9271);transform-origin:0 0;">8.99</div><div class="cell" style="left:1289.5px;top:731.70px;transform:scaleX(0.9361);transform-origin:0 0;">251.72</div><div class="cell" style="left:53.5px;top:771.70px;transform:scaleX(1.0142);transform-origin:0 0;">10/22/2020</div><div class="cell" style="left:259.5px;top:771.70px;">East</div><div class="cell" style="left:465.5px;top:771.70px;">Jones</div><div class="cell" style="left:671.5px;top:771.70px;">Pen</div><div class="cell" style="left:877.5px;top:771.70px;transform:scaleX(0.9517);transform-origin:0 0;">64</div><div class="cell" style="left:1083.5px;top:771.70px;transform:scaleX(0.9271);transform-origin:0 0;">8.99</div><div class="cell" style="left:1289.5px;top:771.70px;transform:scaleX(0.9361);transform-origin:0 0;">575.36</div><div class="cell" style="left:53.5px;top:811.70px;transform:scaleX(1.0220);transform-origin:0 0;">11/8/2020</div><div class="cell" style="left:259.5px;top:811.70px;">East</div><div class="cell" style="left:465.5px;top:811.70px;">Parent</div><div class="cell" style="left:671.5px;top:811.70px;">Pen</div><div class="cell" style="left:877.5px;top:811.70px;transform:scaleX(0.9517);transform-origin:0 0;">15</div><div class="cell" style="left:1083.5px;top:811.70px;transform:scaleX(0.9326);transform-origin:0 0;">19.99</div><div class="cell" style="left:1289.5px;top:811.70px;transform:scaleX(0.9361);transform-origin:0 0;">299.85</div><div class="cell" style="left:53.5px;top:851.70px;transform:scaleX(1.0142);transform-origin:0 0;">11/25/2020</div><div class="cell" style="left:259.5px;top:851.70px;">Central</div><div class="cell" style="left:465.5px;top:851.70px;">Kivell</div><div class="cell" style="left:671.5px;top:851.70px;">Pen Set</div><div class="cell" style="left:877.5px;top:851.70px;transform:scaleX(0.9517);transform-origin:0 0;">96</div><div class="cell" style="left:1083.5px;top:851.70px;transform:scaleX(0.9271);transform-origin:0 0;">4.99</div><div class="cell" style="left:1289.5px;top:851.70px;transform:scaleX(0.9361);transform-origin:0 0;">479.04</div><div class="cell" style="left:53.5px;top:891.70px;transform:scaleX(1.0142);transform-origin:0 0;">12/12/2020</div><div class="cell" style="left:259.5px;top:891.70px;">Central</div><div class="cell" style="left:465.5px;top:891.70px;">Smith</div><div class="cell" style="left:671.5px;top:891.70px;">Pencil</div><div class="cell" style="left:877.5px;top:891.70px;transform:scaleX(0.9517);transform-origin:0 0;">67</div><div class="cell" style="left:1083.5px;top:891.70px;transform:scaleX(0.9271);transform-origin:0 0;">1.29</div><div class="cell" style="left:1289.5px;top:891.70px;transform:scaleX(0.9326);transform-origin:0 0;">86.43</div><div class="cell" style="left:53.5px;top:931.70px;transform:scaleX(1.0142);transform-origin:0 0;">12/29/2020</div><div class="cell" style="left:259.5px;top:931.70px;">East</div><div class="cell" style="left:465.5px;top:931.70px;">Parent</div><div class="cell" style="left:671.5px;top:931.70px;">Pen Set</div><div class="cell" style="left:877.5px;top:931.70px;transform:scaleX(0.9517);transform-origin:0 0;">74</div><div class="cell" style="left:1083.5px;top:931.70px;transform:scaleX(0.9326);transform-origin:0 0;">15.99</div><div class="cell" style="left:1289.5px;top:931.70px;transform:scaleX(0.9271);transform-origin:0 0;">1,183.26</div><div class="cell" style="left:53.5px;top:971.70px;transform:scaleX(1.0220);transform-origin:0 0;">1/15/2021</div><div class="cell" style="left:259.5px;top:971.70px;">Central</div><div class="cell" style="left:465.5px;top:971.70px;">Gill</div><div class="cell" style="left:671.5px;top:971.70px;">Binder</div><div class="cell" style="left:877.5px;top:971.70px;transform:scaleX(0.9517);transform-origin:0 0;">46</div><div class="cell" style="left:1083.5px;top:971.70px;transform:scaleX(0.9271);transform-origin:0 0;">8.99</div><div class="cell" style="left:1289.5px;top:971.70px;transform:scaleX(0.9361);transform-origin:0 0;">413.54</div><div class="cell" style="left:53.5px;top:1011.70px;transform:scaleX(1.0320);transform-origin:0 0;">2/1/2021</div><div class="cell" style="left:259.5px;top:1011.70px;">Central</div><div class="cell" style="left:465.5px;top:1011.70px;">Smith</div><div class="cell" style="left:671.5px;top:1011.70px;">Binder</div><div class="cell" style="left:877.5px;top:1011.70px;transform:scaleX(0.9517);transform-origin:0 0;">87</div><div class="cell" style="left:1083.5px;top:1011.70px;transform:scaleX(0.9517);transform-origin:0 0;">15</div><div class="cell" style="left:1289.5px;top:1011.70px;transform:scaleX(0.9271);transform-origin:0 0;">1,305.00</div><div class="cell" style="left:53.5px;top:1051.70px;transform:scaleX(1.0220);transform-origin:0 0;">2/18/2021</div><div class="cell" style="left:259.5px;top:1051.70px;">East</div><div class="cell" style="left:465.5px;top:1051.70px;">Jones</div><div class="cell" style="left:671.5px;top:1051.70px;">Binder</div><div class="cell" style="left:877.5px;top:1051.70px;transform:scaleX(0.9517);transform-origin:0 0;">4</div><div class="cell" style="left:1083.5px;top:1051.70px;transform:scaleX(0.9271);transform-origin:0 0;">4.99</div><div class="cell" style="left:1289.5px;top:1051.70px;transform:scaleX(0.9326);transform-origin:0 0;">19.96</div><div class="cell" style="left:53.5px;top:1091.70px;transform:scaleX(1.0320);transform-origin:0 0;">3/7/2021</div><div class="cell" style="left:259.5px;top:1091.70px;">West</div><div class="cell" style="left:465.5px;top:1091.70px;">Sorvino</div><div class="cell" style="left:671.5px;top:1091.70px;">Binder</div><div class="cell" style="left:877.5px;top:1091.70px;transform:scaleX(0.9517);transform-origin:0 0;">7</div><div class="cell" style="left:1083.5px;top:1091.70px;transform:scaleX(0.9326);transform-origin:0 0;">19.99</div><div class="cell" style="left:1289.5px;top:1091.70px;transform:scaleX(0.9361);transform-origin:0 0;">139.93</div><div class="a" style="left:871px;top:78px;width:208px;height:323px;border:2px solid #0b6414"></div><div class="a" style="left:1074px;top:396px;width:8px;height:8px;background:#016301;border:1px solid #fff"></div></div>
<div class="a" style="left:2519px;top:210px;width:36px;height:1098px;background:#eeeeee"></div><div class="a" style="left:2529px;top:231px;width:15px;height:672px;background:#dadada"></div><div class="a" style="left:0;top:1308px;width:2555px;height:41px;background:#eeeeee;border-top:1px solid #c6c6c6"></div><div class="a" style="left:107px;top:1309px;width:81.7px;height:35px;background:#ffffff;border-bottom:2px solid #c4c4c4;border-right:1px solid #d8d8d8"></div><div class="t" style="left:121.56px;top:1318.02px;font-size:18.17px;color:#107a48;font-weight:bold;transform:scaleX(0.8707);transform-origin:0 0;">Sheet1</div><div class="t" style="left:203.29px;top:1318.02px;font-size:18.17px;color:#262626;transform:scaleX(0.8720);transform-origin:0 0;">Sheet2</div><div class="t" style="left:283.80px;top:1318.02px;font-size:18.17px;color:#262626;transform:scaleX(0.8575);transform-origin:0 0;">Sheet3</div><div class="a" style="left:268.5px;top:1309px;width:1px;height:35px;background:#c8c8c8"></div><div class="a" style="left:348.5px;top:1309px;width:1px;height:35px;background:#c8c8c8"></div><div class="a" style="left:1541px;top:1322px;width:584px;height:15px;background:#d9d9d9"></div><div class="a" style="left:0;top:1349px;width:2555px;height:32px;background:#f4f4f4;border-top:1px solid #dadada"></div><div class="a" style="left:0;top:1380px;width:2555px;height:1px;background:#5e5e5e"></div><div class="t" style="left:2004.97px;top:1357.30px;font-size:17.01px;color:#262626;transform:scaleX(0.7904);transform-origin:0 0;">AVERAGE: 61.125</div><div class="t" style="left:2132.27px;top:1357.30px;font-size:17.01px;color:#262626;transform:scaleX(0.8564);transform-origin:0 0;">COUNT: 8</div><div class="t" style="left:2212.35px;top:1357.30px;font-size:17.01px;color:#262626;transform:scaleX(0.8509);transform-origin:0 0;">SUM: 489</div><div class="a" style="left:2291px;top:1350px;width:36px;height:29px;background:#d0d0d0"></div><div class="t" style="left:2444.88px;top:1357.30px;font-size:17.01px;color:#8a8a8a;transform:scaleX(0.8655);transform-origin:0 0;">160%</div>
<svg class="a" style="left:0;top:0;pointer-events:none" width="2555" height="1381" viewBox="0 0 2555 1381"><g fill="#8abfa4"><path d="M19,14H22V21.5H32V14H35V29Q35,30 34,30H20Q19,30 19,29Z"/><rect x="24" y="14" width="6.1" height="4.7"/></g><rect x="28.2" y="15.4" width="0.9" height="2" fill="#0d754b"/><path d="M62.9,20.6L69.5,14.2V18C76,18 81,23 81,30H79.2C78,26.5 74.5,23.2 69.5,23.2V27.1Z" fill="#8abfa4"/><path d="M126.3,20.6L119.7,14.2V18C113.2,18 108.2,23 108.2,30H110C111.2,26.5 114.7,23.2 119.7,23.2V27.1Z" fill="#8abfa4"/><path d="M155.5,13.8H164L169.4,19.2V30.3H155.5Z" fill="none" stroke="#8abfa4" stroke-width="1"/><path d="M164,13.8V19.2H169.4Z" fill="#8abfa4"/><rect x="201.6" y="14.6" width="10.8" height="3.5" fill="none" stroke="#8abfa4" stroke-width="0.9"/><path d="M198.9,17.3H215V25H211.8V22.1H202.2V25H198.9Z" fill="#8abfa4"/><path d="M202.6,22.5H211.4V27L209,29.5H202.6Z" fill="none" stroke="#8abfa4" stroke-width="0.9"/><path d="M209,29.5V27H211.4Z" fill="#8abfa4"/><g fill="#8abfa4"><circle cx="257.9" cy="16" r="3"/><circle cx="246.9" cy="22" r="3"/><circle cx="257.9" cy="29" r="3"/></g><path d="M257.9,16L246.9,22L257.9,29" fill="none" stroke="#8abfa4" stroke-width="1"/><rect x="292.7" y="14.5" width="9.7" height="16.8" rx="1.3" fill="none" stroke="#8abfa4" stroke-width="1"/><rect x="292.7" y="28.6" width="9.7" height="2.7" fill="#8abfa4"/><rect x="297" y="29.3" width="1.2" height="1.3" fill="#0d754b"/><g fill="none" stroke="#a9d5bf" stroke-width="1"><path d="M2356.5,16.3L2360.5,20.3M2356.5,16.3V19.8M2356.5,16.3H2360"/><path d="M2367.6,16.3L2363.6,20.3M2367.6,16.3V19.8M2367.6,16.3H2364.1"/><path d="M2356.5,27.5L2360.5,23.5M2356.5,27.5V24M2356.5,27.5H2360"/><path d="M2367.6,27.5L2363.6,23.5M2367.6,27.5V24M2367.6,27.5H2364.1"/><path d="M2411.1,22.3H2422.9"/><path d="M2468,17.8V16.5H2477.3V26.3H2476"/><rect x="2466.5" y="18.3" width="9.3" height="9.3"/><path d="M2521,16L2533,28M2533,16L2521,28"/></g><path d="M111.70,62.00H121.30L116.50,67.00Z" fill="#45515b"/><path d="M206.20,62.00H215.80L211.00,67.00Z" fill="#45515b"/><path d="M347.20,62.00H356.80L352.00,67.00Z" fill="#45515b"/><path d="M466.20,62.00H475.80L471.00,67.00Z" fill="#45515b"/><path d="M552.80,62.00H562.40L557.60,67.00Z" fill="#45515b"/><path d="M655.20,62.00H664.80L660.00,67.00Z" fill="#45515b"/><path d="M744.20,62.00H753.80L749.00,67.00Z" fill="#45515b"/><circle cx="2527.3" cy="65.3" r="17.3" fill="#3c8f6c"/><path d="M2522.5,60.5C2522.5,52 2532,52 2532,60.5C2532,64 2531,66 2530,67.5L2530,70C2534,71 2540,73 2541,75.5C2538,80.5 2533,82.6 2527.3,82.6C2522,82.6 2517.5,80.5 2514.5,77C2518,74 2523,72.5 2524,71.5L2524,68C2523,66 2522.5,64 2522.5,60.5Z" fill="#0e7447"/><path d="M2531.5,73.5L2529,80.5L2531.5,79.3L2533,81.2L2535,75.5ZM2538.5,73.5L2541,80.5L2538.5,79.3L2537,81.2L2535,75.5Z" fill="#ff7a10" stroke="#fff" stroke-width="0.5"/><circle cx="2535" cy="70.7" r="5.6" fill="#ff8518" stroke="#fff" stroke-width="0.8"/><rect x="19.8" y="98.5" width="22.8" height="30.5" rx="1.5" fill="#ffcc95" stroke="#36434d" stroke-width="1.1"/><rect x="25.2" y="95.3" width="9.8" height="4.5" rx="1" fill="none" stroke="#36434d" stroke-width="1.1"/><rect x="25" y="99.5" width="12" height="3.2" fill="#36434d"/><path d="M29.8,107.3H38.5L45.4,114.2V128Q45.4,129.2 44.2,129.2H31Q29.8,129.2 29.8,128Z" fill="#fff" stroke="#9a9ea2" stroke-width="1"/><path d="M38.5,107.6V114.2H45.2Z" fill="#9a9ea2"/><path d="M28.20,155.80H37.80L33.00,160.60Z" fill="#45515b"/><path d="M73.3,101C74.8,102 77.5,105.5 80.8,110.6L78.8,112.8C75.5,108.2 73,104.5 73.3,101Z" fill="#36434d"/><path d="M85.3,101C83.8,102 81.1,105.5 77.8,110.6L79.8,112.8C83.1,108.2 85.6,104.5 85.3,101Z" fill="#36434d"/><path d="M79.3,111L75.6,116.2M79.3,111L83,116.2" stroke="#36434d" stroke-width="1.8"/><rect x="78.4" y="110.3" width="1.8" height="1.8" fill="#1ea0e0"/><circle cx="74.2" cy="117.8" r="2.4" fill="none" stroke="#36434d" stroke-width="1.1"/><circle cx="84.2" cy="117.8" r="2.4" fill="none" stroke="#36434d" stroke-width="1.1"/><path d="M68.6,134.2H74.8L79,138.2V151.8H68.6Z" fill="#fff" stroke="#9a9ea2" stroke-width="0.9"/><path d="M74.8,134.4V138.2H78.8Z" fill="#9a9ea2"/><path d="M76.2,139.4H83.3L89.4,145.5V156.4Q89.4,157.4 88.4,157.4H77.2Q76.2,157.4 76.2,156.4Z" fill="#fff" stroke="#36434d" stroke-width="1"/><path d="M83.3,139.6V145.5H89.2Z" fill="#36434d"/><g stroke="#1ea0e0" stroke-width="1"><path d="M112,100.5H133"/><path d="M112,106.4H126"/><path d="M112,112.3H120"/></g><path d="M141,98.5L143.8,101.3L131.2,114L128.4,111.2Z" fill="#36434d"/><path d="M126,113.2C129.5,112.5 132.5,114.5 132.5,118C132.5,119.5 132,120.5 131.5,121.2L119,122.5C120,119 122,114 126,113.2Z" fill="#ff8a18"/><path d="M119,120.8C123,121.2 128,119.5 131.5,121.2C130,124 127,126 124,126L116.2,126.2C117.5,124.5 118.5,122.5 119,120.8Z" fill="#0e6fbf"/><path d="M295.20,109.00H304.80L300.00,114.00Z" fill="#45515b"/><path d="M374.30,109.00H383.90L379.10,114.00Z" fill="#45515b"/><path d="M397,111.2H411.2M428.8,111H443M435.9,104.2V117.8" stroke="#36434d" stroke-width="1.6"/><path d="M229.6,138.8L221,153" stroke="#36434d" stroke-width="1.7"/><path d="M252.9,153.5H267" stroke="#36434d" stroke-width="1.1"/><path d="M278.10,144.20H287.90L283.00,149.00Z" fill="#45515b"/><g fill="none" stroke="#5b6670" stroke-width="0.9" stroke-dasharray="1.3,1.3"><path d="M300.8,155.3V138.5Q300.8,137.6 301.7,137.6H320Q320.9,137.6 320.9,138.5V155.3"/><path d="M310.8,138.6V155M301.6,146.5H320"/></g><path d="M300.8,155.3H320.9" stroke="#36434d" stroke-width="1.2"/><path d="M328.10,144.20H337.90L333.00,149.00Z" fill="#45515b"/><path d="M357.6,143.5C357,137.5 358.6,134 360.9,134C363.2,134 364.6,137.2 364.3,141.2" fill="none" stroke="#36434d" stroke-width="0.9"/><path d="M355.3,144.6L360.9,139.2L367.9,146.6L362.4,151.8Q361.5,152.6 360.5,151.8L356,147Q354.8,145.6 355.3,144.6Z" fill="#fff" stroke="#36434d" stroke-width="0.9"/><path d="M361.3,141.8C359,143.5 357.3,147 356.8,150.6" fill="none" stroke="#1170c0" stroke-width="2" stroke-linecap="round"/><rect x="351.6" y="153.8" width="23" height="4.8" fill="#ffff00" stroke="#d8d8c0" stroke-width="0.4"/><path d="M383.10,144.20H392.90L388.00,149.00Z" fill="#45515b"/><rect x="407.8" y="153.8" width="22.7" height="4.6" fill="#ff0000"/><path d="M439.00,144.20H448.80L443.90,149.00Z" fill="#45515b"/><rect x="474.7" y="97.7" width="28.8" height="28.6" rx="3.5" fill="#e0ede6" stroke="#a9d3bd" stroke-width="1"/><rect x="474.7" y="132.7" width="28.8" height="28.6" rx="3.5" fill="#e0ede6" stroke="#a9d3bd" stroke-width="1"/><path d="M479.1,111.4H496.9" stroke="#36434d" stroke-width="1.2"/><path d="M482.2,115.4H493.8" stroke="#36434d" stroke-width="1.2"/><path d="M479.1,119.4H496.9" stroke="#36434d" stroke-width="1.2"/><path d="M514.2,107.4H531.9" stroke="#36434d" stroke-width="1.2"/><path d="M517,111.4H529" stroke="#36434d" stroke-width="1.2"/><path d="M514.2,115.4H531.9" stroke="#36434d" stroke-width="1.2"/><path d="M549,103.5H567" stroke="#36434d" stroke-width="1.2"/><path d="M552.1,107.4H563.9" stroke="#36434d" stroke-width="1.2"/><path d="M549,111.4H567" stroke="#36434d" stroke-width="1.2"/><path d="M480,138.4H498" stroke="#36434d" stroke-width="1.2"/><path d="M515.1,138.4H533" stroke="#36434d" stroke-width="1.2"/><path d="M550.1,138.4H568" stroke="#36434d" stroke-width="1.2"/><path d="M480,142.4H492" stroke="#36434d" stroke-width="1.2"/><path d="M518,142.4H530" stroke="#36434d" stroke-width="1.2"/><path d="M556.2,142.4H568" stroke="#36434d" stroke-width="1.2"/><path d="M480,146.4H498" stroke="#36434d" stroke-width="1.2"/><path d="M515.1,146.4H533" stroke="#36434d" stroke-width="1.2"/><path d="M550.1,146.4H568" stroke="#36434d" stroke-width="1.2"/><path d="M480,150.4H492" stroke="#36434d" stroke-width="1.2"/><path d="M518,150.4H530" stroke="#36434d" stroke-width="1.2"/><path d="M556.2,150.4H568" stroke="#36434d" stroke-width="1.2"/><path d="M480,154.4H498" stroke="#36434d" stroke-width="1.2"/><path d="M515.1,154.4H533" stroke="#36434d" stroke-width="1.2"/><path d="M550.1,154.4H568" stroke="#36434d" stroke-width="1.2"/><path d="M584.5,97.2V126.6M584.5,132.3V161.6" stroke="#d6d6d6" stroke-width="1"/><text x="0" y="0" transform="translate(598.5,120) rotate(-45)" font-family="Liberation Sans" font-size="11.5" fill="#36434d">ABC</text><path d="M604.3,122.1L615.5,111.3" stroke="#1170c0" stroke-width="1.1"/><path d="M618.3,108.6L617.6,116.5L610.4,109.3Z" fill="#1170c0"/><path d="M625.10,108.80H634.90L630.00,113.80Z" fill="#45515b"/><path d="M594.9,138.4H613" stroke="#36434d" stroke-width="1.2"/><path d="M605.1,142.4H613" stroke="#36434d" stroke-width="1.2"/><path d="M605.1,146.4H613" stroke="#36434d" stroke-width="1.2"/><path d="M605.1,150.4H613" stroke="#36434d" stroke-width="1.2"/><path d="M594.9,154.4H613" stroke="#36434d" stroke-width="1.2"/><path d="M631,138.4H649" stroke="#36434d" stroke-width="1.2"/><path d="M641.1,142.4H649" stroke="#36434d" stroke-width="1.2"/><path d="M641.1,146.4H649" stroke="#36434d" stroke-width="1.2"/><path d="M641.1,150.4H649" stroke="#36434d" stroke-width="1.2"/><path d="M631,154.4H649" stroke="#36434d" stroke-width="1.2"/><path d="M594.9,146.4L600,142.2V150.6Z" fill="#e0143c"/><path d="M599,146.4H604" stroke="#e0143c" stroke-width="1.1"/><path d="M640,146.4L635.2,142.2V150.6Z" fill="#e0143c"/><path d="M631,146.4H636" stroke="#e0143c" stroke-width="1.1"/><path d="M699.8,102.6H684.4Q682.6,102.6 682.6,104.4V106.6Q682.6,108.4 684.4,108.4H699.8" fill="none" stroke="#8d8d8d" stroke-width="0.9"/><path d="M694,113.6H684.4Q682.6,113.6 682.6,115.4V117.6Q682.6,119.4 684.4,119.4H694" fill="none" stroke="#8d8d8d" stroke-width="0.9"/><path d="M685.1,105.5H702.9M685.1,116.5H691.7" stroke="#1170c0" stroke-width="1"/><path d="M702.6,109.4C702.6,114 700,116.5 696,116.5" fill="none" stroke="#3d4e5c" stroke-width="0.9"/><path d="M693.3,116.5L697.2,113.3V119.8Z" fill="#3d4e5c"/><rect x="682.8" y="137.8" width="19.4" height="17.3" rx="1.6" fill="#fff" stroke="#3d4e5c" stroke-width="1.1"/><path d="M684.1,142.4H700.9M684.1,150.4H700.9M692.5,139.3V142.4M692.5,150.4V153.5" stroke="#c2c6ca" stroke-width="0.8"/><path d="M687.5,146.5H697.5" stroke="#3ba86a" stroke-width="0.9"/><path d="M685.9,146.5L689,143.6V149.4Z M699.1,146.5L696,143.6V149.4Z" fill="#3ba86a"/><path d="M1011.60,108.80H1021.40L1016.50,113.80Z" fill="#45515b"/><path d="M874.30,143.95H883.70L879.00,148.85Z" fill="#45515b"/><path d="M939.2,142.6C941.5,142 944.8,143 945.2,146C945.6,149.2 942.5,151.8 938.5,152.5C940.5,151.4 942,150 942.3,148.5C940.5,148.8 938,148 937.9,145.8C937.8,144 938.3,143 939.2,142.6Z" fill="#36434d"/><path d="M972.1,141.5L976.1,138.3V144.8Z M1010.8,151.5L1006.8,148.1V155Z" fill="#e0143c"/><g font-family="Liberation Sans" font-size="9.7" fill="#36434d"><text x="978.3" y="144.9">0</text><text x="968" y="155">.00</text><text x="1002.8" y="144.9">.00</text><text x="1013" y="155">0</text></g><rect x="1078.6" y="99.6" width="29.7" height="25.6" rx="1.6" fill="#fff" stroke="#3d4e5c" stroke-width="1.1"/><path d="M1093.5,101.5V123.5" stroke="#c8ccd0" stroke-width="0.8"/><rect x="1080.1" y="106.2" width="26.7" height="12.3" fill="#aae3d2" stroke="#cfcfcf" stroke-width="0.5"/><path d="M1087.1,110.5H1099.8M1087.1,114.5H1099.8M1089.7,117.5L1097.4,107.4" stroke="#3d4e5c" stroke-width="1.2"/><path d="M1124.70,155.80H1134.10L1129.40,160.60Z" fill="#45515b"/><path d="M1500.4,102.8L1505,107.8H1495.8Z" fill="#45515b"/><path d="M1495.80,126.20H1505.00L1500.40,131.00Z" fill="#45515b"/><path d="M1495.8,148.8H1505M1495.8,150.8H1505" stroke="#45515b" stroke-width="1.1"/><path d="M1495.80,152.20H1505.00L1500.40,157.00Z" fill="#45515b"/><rect x="1546.8" y="99.8" width="29.299999999999955" height="25.0" rx="1.5" fill="#fff" stroke="#36434d" stroke-width="1"/><path d="M1554.4,102.3V123.3" stroke="#c8cdd2" stroke-width="0.8"/><path d="M1561.4,102.3V123.3" stroke="#c8cdd2" stroke-width="0.8"/><path d="M1568.5,102.3V123.3" stroke="#c8cdd2" stroke-width="0.8"/><path d="M1548.3,106.3H1574.6" stroke="#c8cdd2" stroke-width="0.8"/><path d="M1548.3,112.4H1574.6" stroke="#c8cdd2" stroke-width="0.8"/><path d="M1548.3,118.5H1574.6" stroke="#c8cdd2" stroke-width="0.8"/><rect x="1556.8" y="98.8" width="21.3" height="7.2" rx="1.5" fill="#b3e3d1" stroke="#3aa56b" stroke-width="1"/><path d="M1563.4,100.8V104M1571.5,100.8V104" stroke="#3aa56b" stroke-width="0.9"/><path d="M1558.80,155.90H1568.20L1563.50,160.70Z" fill="#45515b"/><rect x="1606.7" y="99.8" width="29.299999999999955" height="25.0" rx="1.5" fill="#fff" stroke="#36434d" stroke-width="1"/><path d="M1614.5,102.3V123.3" stroke="#c8cdd2" stroke-width="0.8"/><path d="M1621.5,102.3V123.3" stroke="#c8cdd2" stroke-width="0.8"/><path d="M1628.5,102.3V123.3" stroke="#c8cdd2" stroke-width="0.8"/><path d="M1608.2,106.3H1634.5" stroke="#c8cdd2" stroke-width="0.8"/><path d="M1608.2,112.4H1634.5" stroke="#c8cdd2" stroke-width="0.8"/><path d="M1608.2,118.5H1634.5" stroke="#c8cdd2" stroke-width="0.8"/><rect x="1616.7" y="105.8" width="21.5" height="7.3" rx="1.5" fill="#ffbcc8" stroke="#e0143c" stroke-width="1"/><path d="M1623.5,107.8V111.2M1631.5,107.8V111.2" stroke="#e0143c" stroke-width="0.9"/><path d="M1618.80,155.90H1628.20L1623.50,160.70Z" fill="#45515b"/><rect x="1666.9" y="99.8" width="29.0" height="25.0" rx="1.5" fill="#fff" stroke="#36434d" stroke-width="1"/><path d="M1674.4,102.3V123.3" stroke="#c8cdd2" stroke-width="0.8"/><path d="M1681.4,102.3V123.3" stroke="#c8cdd2" stroke-width="0.8"/><path d="M1688.5,102.3V123.3" stroke="#c8cdd2" stroke-width="0.8"/><path d="M1668.4,106.3H1694.4" stroke="#c8cdd2" stroke-width="0.8"/><path d="M1668.4,112.4H1694.4" stroke="#c8cdd2" stroke-width="0.8"/><path d="M1668.4,118.5H1694.4" stroke="#c8cdd2" stroke-width="0.8"/><g transform="translate(1691.4,120.5)" fill="#444"><circle r="5.3"/><rect x="-1.6" y="-7.3" width="3.2" height="3.5" transform="rotate(0)"/><rect x="-1.6" y="-7.3" width="3.2" height="3.5" transform="rotate(45)"/><rect x="-1.6" y="-7.3" width="3.2" height="3.5" transform="rotate(90)"/><rect x="-1.6" y="-7.3" width="3.2" height="3.5" transform="rotate(135)"/><rect x="-1.6" y="-7.3" width="3.2" height="3.5" transform="rotate(180)"/><rect x="-1.6" y="-7.3" width="3.2" height="3.5" transform="rotate(225)"/><rect x="-1.6" y="-7.3" width="3.2" height="3.5" transform="rotate(270)"/><rect x="-1.6" y="-7.3" width="3.2" height="3.5" transform="rotate(315)"/></g><circle cx="1691.4" cy="120.5" r="2.3" fill="#fff"/><path d="M1678.80,155.90H1688.20L1683.50,160.70Z" fill="#45515b"/><rect x="1744.8" y="99.9" width="29.4" height="25.2" rx="1.6" fill="#fff" stroke="#3d4e5c" stroke-width="1.1"/><path d="M1751.9,123.6V106.8Q1751.9,105.9 1752.8,105.9H1758.1Q1759,105.9 1759,106.8V123.6" fill="#b3e3d1" stroke="#3aa56b" stroke-width="0.9"/><path d="M1764.9,123.6V113.7Q1764.9,112.8 1765.8,112.8H1771.1Q1772,112.8 1772,113.7V123.6" fill="#b3e3d1" stroke="#3aa56b" stroke-width="0.9"/><path d="M1746.9,123.6V112.7Q1746.9,111.8 1747.8,111.8H1753.3Q1754.2,111.8 1754.2,112.7V123.6" fill="#ffb9c6" stroke="#e0143c" stroke-width="0.9"/><path d="M1759,123.6V117.6Q1759,116.7 1759.9,116.7H1765.2Q1766.1,116.7 1766.1,117.6V123.6" fill="#ffb9c6" stroke="#e0143c" stroke-width="0.9"/><path d="M1754.80,155.90H1764.20L1759.50,160.70Z" fill="#45515b"/><path d="M1815.5,100.3H1829.6V104.2H1828.2V102.3H1819.5L1825.5,109.5L1819.3,116.8H1828.4V114.8H1829.8V118.8H1815.3V117.6L1822.6,109.5L1815.5,101.5Z" fill="#36434d"/><path d="M1908.30,106.90H1917.70L1913.00,111.70Z" fill="#45515b"/><rect x="1813.8" y="140.9" width="19.299999999999955" height="17.299999999999983" rx="1.5" fill="#fff" stroke="#36434d" stroke-width="1"/><path d="M1818.7,143.4V156.7" stroke="#c8cdd2" stroke-width="0.8"/><path d="M1823.4,143.4V156.7" stroke="#c8cdd2" stroke-width="0.8"/><path d="M1828.1,143.4V156.7" stroke="#c8cdd2" stroke-width="0.8"/><path d="M1815.3,145H1831.6" stroke="#c8cdd2" stroke-width="0.8"/><path d="M1815.3,149.5H1831.6" stroke="#c8cdd2" stroke-width="0.8"/><path d="M1815.3,154H1831.6" stroke="#c8cdd2" stroke-width="0.8"/><circle cx="1830.4" cy="155.4" r="5.6" fill="#e0143c"/><path d="M1828.2,153.2L1832.6,157.6M1832.6,153.2L1828.2,157.6" stroke="#fff" stroke-width="1.3"/><path d="M1884.30,147.30H1893.70L1889.00,151.70Z" fill="#45515b"/><rect x="1938.1" y="99" width="20.9" height="3.5" fill="#36434d"/><path d="M1938.6,102.5V107.8L1945.8,115V125.3L1948.8,122.8V115L1958.5,105V102.5" fill="none" stroke="#36434d" stroke-width="0.9"/><text x="1960.6" y="109.7" font-family="Liberation Sans" font-weight="bold" font-size="12.4" fill="#36434d" transform="translate(1960.6,0) scale(0.88,1) translate(-1960.6,0)">A</text><text x="1961.4" y="121.9" font-family="Liberation Sans" font-weight="bold" font-size="12.4" fill="#1170c0" transform="translate(1961.4,0) scale(0.88,1) translate(-1961.4,0)">Z</text><path d="M1966.00,156.30H1975.40L1970.70,160.50Z" fill="#45515b"/><circle cx="2009.7" cy="107" r="10.4" fill="#fff" stroke="#1170c0" stroke-width="1"/><path d="M2018.1,116.9L2028.6,125.3" stroke="#36434d" stroke-width="3" stroke-linecap="round"/><path d="M2021,100.9C2024.5,101.5 2027,104.5 2027,109" fill="none" stroke="#e0143c" stroke-width="0.9"/><path d="M2022.4,108.9H2031.8L2027.1,114.3Z" fill="#e0143c"/><path d="M2006.9,117C2007.2,121.5 2009.5,124.5 2013,125.8" fill="none" stroke="#e0143c" stroke-width="0.9"/><path d="M2001.7,118.8H2011.6L2006.6,113.1Z" fill="#e0143c"/><path d="M2032.20,156.30H2041.60L2036.90,160.50Z" fill="#45515b"/><path d="M2523,158.3L2529,151.5L2535,158.3" fill="none" stroke="#36434d" stroke-width="1.2"/><path d="M111.6,186.9H120.4L116,192.5Z" fill="#45515b"/><g fill="#b0b0b0"><circle cx="138" cy="185.6" r="1.9"/><circle cx="138" cy="192" r="1.9"/><circle cx="138" cy="198" r="1.9"/></g><path d="M160.8,184.6L172.6,195.2M172.6,184.6L160.8,195.2" stroke="#f5bcc2" stroke-width="1.4"/><path d="M199.5,190.5L204,195L214,184.8" fill="none" stroke="#d2ebde" stroke-width="1.4"/><text x="236.2" y="195" font-family="Liberation Sans" font-style="italic" font-size="18.5" fill="#36434d" transform="translate(236.2,0) scale(0.95,1) translate(-236.2,0)">fx</text><path d="M2531,186L2535.5,191.2L2540,186" fill="none" stroke="#555" stroke-width="1.1"/><path d="M2532,223H2541L2536.5,217.8Z" fill="#777"/><path d="M2531.8,1296H2542.3L2537,1301.8Z" fill="#777"/><g fill="#c0c0c0"><rect x="13.8" y="1322.9" width="1.2" height="12.1"/><path d="M16.4,1328.9L22,1322.9V1335Z"/><path d="M40,1328.9L45.8,1322.9V1335Z"/><path d="M70.8,1328.9L65.2,1322.9V1335Z"/><rect x="95.9" y="1322.9" width="1.2" height="12.1"/><path d="M94.7,1328.9L88.9,1322.9V1335Z"/></g><path d="M379.6,1326H391.6M385.6,1320V1332" stroke="#6f6f6f" stroke-width="1.3"/><g fill="#a9a9a9"><circle cx="1506.9" cy="1322.9" r="2.05"/><circle cx="1506.9" cy="1329" r="2.05"/><circle cx="1506.9" cy="1335.1" r="2.05"/></g><path d="M1527.8,1329.3L1533,1324.4V1334.2Z" fill="#6a6a6a"/><path d="M2512.4,1329.3L2507.2,1324.4V1334.2Z" fill="#6a6a6a"/><g fill="none" stroke="#46535d" stroke-width="0.9"><rect x="2302.7" y="1359.5" width="12.7" height="13.7"/><path d="M2306.9,1359.5V1373.2M2311.2,1359.5V1373.2M2302.7,1364H2315.4M2302.7,1368.6H2315.4"/><rect x="2344.6" y="1359.5" width="12.7" height="13.7"/><path d="M2348.5,1359.5V1367.5M2353.3,1359.5V1367.5H2344.6"/></g><path d="M2402.2,1364.1H2414.8M2512,1364.4H2525.4M2518.7,1357.7V1371.1" stroke="#45515b" stroke-width="1.4"/><path d="M498.2,221.6L645,164.7L636.8,156L680.7,165.2L649.4,198.6L651.6,186.5Z" fill="#fff" stroke="#fff" stroke-width="7" stroke-linejoin="round"/><path d="M498.2,221.6L645,164.7L636.8,156L680.7,165.2L649.4,198.6L651.6,186.5Z" fill="#e84a4a"/></svg>
</body></html>
